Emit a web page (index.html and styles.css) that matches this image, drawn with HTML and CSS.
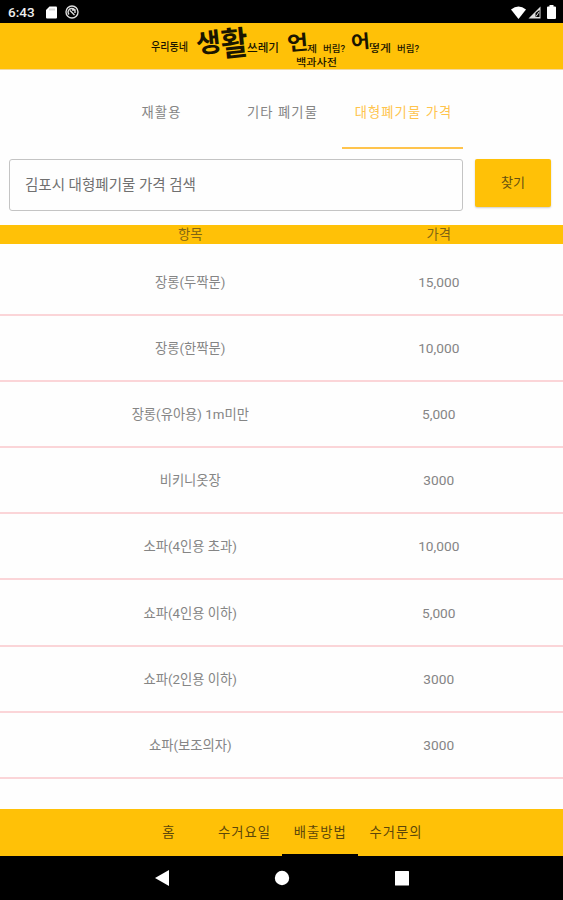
FILE: index.html
```html
<!DOCTYPE html>
<html lang="ko">
<head>
  <meta charset="UTF-8"/>
  <meta name="viewport" content="width=device-width, initial-scale=1.0"/>
  <title>대형폐기물 가격</title>
  <link rel="stylesheet" href="styles.css">
</head>
<body>

<div class="screen">
  <div class="status-bar">
    <span class="clock">6:43</span>
    <svg class="sd-icon" width="11" height="13" viewBox="0 0 11 13"><path d="M3.5 0.5H10Q11 0.5 11 1.5V11.5Q11 12.5 10 12.5H1Q0 12.5 0 11.5V4Z" fill="#fff"/><path d="M4 2.5V4.5M6 2.5V4.5M8 2.5V4.5" stroke="#999" stroke-width="0.8"/></svg>
    <svg class="sync-icon" width="14" height="14" viewBox="0 0 14 14"><circle cx="7" cy="7" r="6" fill="none" stroke="#ddd" stroke-width="1.4"/><path d="M4 9.5A4 4 0 0 1 4.5 4.2Q7 2.5 9.5 4.5M5 5.5L9.5 10M7 5H10V8" fill="none" stroke="#ddd" stroke-width="1.4"/></svg>
    <div class="status-right">
      <svg width="15" height="13" viewBox="0 0 15 13"><path d="M0 3.5Q7.5 -2.5 15 3.5L7.5 13Z" fill="#fff"/></svg>
      <svg width="13" height="13" viewBox="0 0 13 13"><path d="M0.5 12.5L12.5 0.5V12.5Z" fill="#ddd"/><path d="M7.5 11V7L11.5 4V11Z" fill="#000"/><path d="M8 10.5L11 6" stroke="#ddd"/></svg>
      <svg width="9" height="14" viewBox="0 0 9 14"><path d="M2.5 0H6.5V1.5H8Q9 1.5 9 2.5V13Q9 14 8 14H1Q0 14 0 13V2.5Q0 1.5 1 1.5H2.5Z" fill="#fff"/></svg>
    </div>
  </div>

  <header class="app-bar">
    <svg class="logo" width="280" height="46" viewBox="0 0 280 46">
      <text class="small" x="6" y="28" font-size="11" textLength="37" lengthAdjust="spacingAndGlyphs">우리동네</text>
      <text x="51" y="29" font-size="26" textLength="25" lengthAdjust="spacingAndGlyphs" transform="rotate(-6 64 20)">생</text>
      <text x="76" y="32" font-size="33" textLength="27" lengthAdjust="spacingAndGlyphs" transform="rotate(-6 90 20)">활</text>
      <text class="small" x="102" y="29" font-size="11" textLength="32" lengthAdjust="spacingAndGlyphs">쓰레기</text>
      <text x="142" y="27" font-size="20" textLength="21" lengthAdjust="spacingAndGlyphs" transform="rotate(-5 152 20)">언</text>
      <text class="small" x="162" y="29" font-size="9" textLength="10" lengthAdjust="spacingAndGlyphs">제</text>
      <text class="small" x="178" y="29" font-size="9" textLength="22" lengthAdjust="spacingAndGlyphs">버림?</text>
      <text x="206" y="25" font-size="18" textLength="19" lengthAdjust="spacingAndGlyphs" transform="rotate(-5 215 20)">어</text>
      <text class="small" x="224" y="29" font-size="10" textLength="22" lengthAdjust="spacingAndGlyphs">떻게</text>
      <text class="small" x="252" y="29" font-size="9" textLength="22" lengthAdjust="spacingAndGlyphs">버림?</text>
      <text class="small" x="151" y="43" font-size="10" textLength="41" lengthAdjust="spacingAndGlyphs">백과사전</text>
    </svg>
  </header>

  <nav class="tabs">
    <a class="tab">재활용</a>
    <a class="tab">기타 폐기물</a>
    <a class="tab active">대형폐기물 가격</a>
  </nav>

  <div class="search">
    <div class="search-input">김포시 대형폐기물 가격 검색</div>
    <button class="search-button">찾기</button>
  </div>

  <div class="table-head">
    <span>항목</span>
    <span>가격</span>
  </div>
  <div class="table-body">
    <div class="row"><span>장롱(두짝문)</span><span>15,000</span></div>
    <div class="row"><span>장롱(한짝문)</span><span>10,000</span></div>
    <div class="row"><span>장롱(유아용) 1m미만</span><span>5,000</span></div>
    <div class="row"><span>비키니옷장</span><span>3000</span></div>
    <div class="row"><span>소파(4인용 초과)</span><span>10,000</span></div>
    <div class="row"><span>쇼파(4인용 이하)</span><span>5,000</span></div>
    <div class="row"><span>쇼파(2인용 이하)</span><span>3000</span></div>
    <div class="row"><span>쇼파(보조의자)</span><span>3000</span></div>
  </div>

  <nav class="bottom-nav">
    <a class="nav-item">홈</a>
    <a class="nav-item">수거요일</a>
    <a class="nav-item active">배출방법</a>
    <a class="nav-item">수거문의</a>
  </nav>

  <div class="system-bar">
    <svg width="16" height="18" viewBox="0 0 16 18"><path d="M15 1V17L1 9Z" fill="#fff"/></svg>
    <svg width="16" height="18" viewBox="0 0 16 18"><circle cx="8" cy="9" r="7.2" fill="#fff"/></svg>
    <svg width="16" height="18" viewBox="0 0 16 18"><rect x="1" y="2" width="14" height="14.5" rx="0.5" fill="#fff"/></svg>
  </div>
</div>

</body>
</html>
```
FILE: styles.css
```css
* {
  box-sizing: border-box;
}

body {
  margin: 0;
  font-family: Roboto, 'Noto Sans CJK KR', sans-serif;
  background-color: #fefefe;
}

.screen {
  display: flex;
  flex-direction: column;
  width: 563px;
  height: 900px;
  overflow: hidden;
}

.status-bar {
  display: flex;
  align-items: center;
  height: 23px;
  padding: 1px 7px 0 8px;
  background-color: #000;
  color: #eee;
}

.clock {
  width: 38px;
  font-size: 13.5px;
  font-weight: 500;
}

.sync-icon {
  margin-left: 8px;
}

.status-right {
  display: flex;
  align-items: center;
  gap: 2px;
  margin-left: auto;
}

.status-right svg:last-child {
  margin-left: 4px;
}

.app-bar {
  display: flex;
  height: 47px;
  padding-left: 145px;
  background-color: #ffc107;
  border-bottom: 1px solid #f3d9a0;
}

.logo {
  overflow: visible;
  font-family: Roboto, 'Noto Sans CJK KR', sans-serif;
  font-weight: 700;
  fill: #1a1500;
}

.logo .small {
  font-weight: 500;
}

.tabs {
  display: flex;
  height: 79px;
  padding-left: 100px;
}

.tab {
  display: flex;
  align-items: center;
  justify-content: center;
  width: 121px;
  padding: 5px 0 0 2px;
  border-bottom: 2px solid transparent;
  font-size: 13.3px;
  letter-spacing: 1.1px;
  white-space: nowrap;
  color: #858585;
}

.tab.active {
  color: #ffc44d;
  border-bottom-color: #ffc44d;
}

.search {
  display: flex;
  align-items: flex-start;
  gap: 12px;
  height: 76px;
  padding: 10px 12px 0 9px;
}

.search-input {
  flex: 1;
  height: 52px;
  padding-left: 15px;
  border: 1px solid #c4c4c4;
  border-radius: 3px;
  font-size: 14.5px;
  line-height: 51px;
  color: #707070;
}

.search-button {
  width: 76px;
  height: 48px;
  padding: 0 0 3px;
  border: none;
  border-radius: 2px;
  background-color: #ffc107;
  box-shadow: 0 1px 2px rgba(0,0,0,0.2);
  font-family: inherit;
  font-size: 13px;
  color: #665010;
}

.table-head,
.row {
  display: grid;
  grid-template-columns: 1fr 1fr;
  align-items: center;
  padding-left: 66px;
  text-align: center;
  font-size: 13.3px;
}

.table-head {
  height: 19px;
  background-color: #ffc107;
  line-height: 19px;
  color: #806414;
}

.table-body {
  flex: 1;
  padding-top: 6px;
}

.row {
  height: 66.1px;
  border-bottom: 2px solid #fbd5d8;
  line-height: 20px;
  color: #858585;
}

.row span:first-child {
  padding-top: 2px;
}

.row span:last-child {
  font-size: 13.7px;
}

.bottom-nav {
  display: flex;
  height: 47px;
  padding-left: 131px;
  background-color: #ffc107;
}

.nav-item {
  display: flex;
  align-items: center;
  justify-content: center;
  width: 75.7px;
  border-bottom: 2px solid transparent;
  font-size: 13.3px;
  letter-spacing: 1px;
  color: #5c470a;
}

.nav-item.active {
  border-bottom-color: #000;
}

.system-bar {
  display: flex;
  justify-content: center;
  gap: 104px;
  height: 44px;
  padding-top: 13px;
  background-color: #000;
}
```
